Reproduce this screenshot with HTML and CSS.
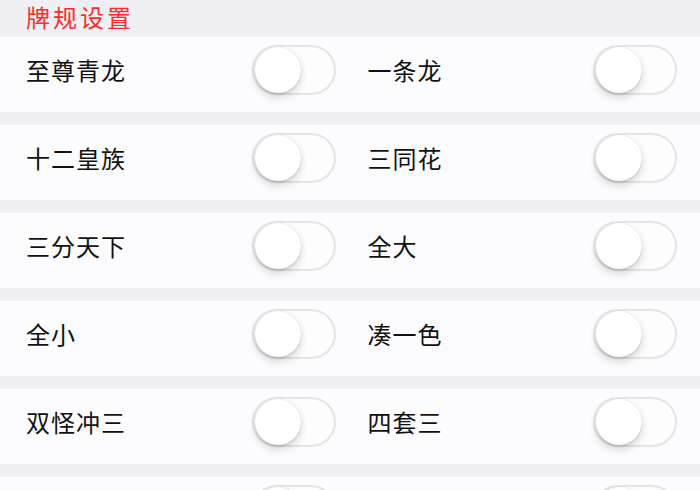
FILE: index.html
```html
<!DOCTYPE html>
<html lang="zh-CN">
<head>
<meta charset="utf-8">
<link rel="stylesheet" href="styles.css">
</head>
<body>
<div class="page">
  <div class="section-title">牌规设置</div>
  <div class="list">
    <div class="row">
      <div class="cell"><span class="label">至尊青龙</span><span class="switch"><span class="knob"></span></span></div>
      <div class="cell"><span class="label">一条龙</span><span class="switch"><span class="knob"></span></span></div>
    </div>
    <div class="row">
      <div class="cell"><span class="label">十二皇族</span><span class="switch"><span class="knob"></span></span></div>
      <div class="cell"><span class="label">三同花</span><span class="switch"><span class="knob"></span></span></div>
    </div>
    <div class="row">
      <div class="cell"><span class="label">三分天下</span><span class="switch"><span class="knob"></span></span></div>
      <div class="cell"><span class="label">全大</span><span class="switch"><span class="knob"></span></span></div>
    </div>
    <div class="row">
      <div class="cell"><span class="label">全小</span><span class="switch"><span class="knob"></span></span></div>
      <div class="cell"><span class="label">凑一色</span><span class="switch"><span class="knob"></span></span></div>
    </div>
    <div class="row">
      <div class="cell"><span class="label">双怪冲三</span><span class="switch"><span class="knob"></span></span></div>
      <div class="cell"><span class="label">四套三</span><span class="switch"><span class="knob"></span></span></div>
    </div>
    <div class="row">
      <div class="cell"><span class="label"></span><span class="switch"><span class="knob"></span></span></div>
      <div class="cell"><span class="label"></span><span class="switch"><span class="knob"></span></span></div>
    </div>
  </div>
</div>
</body>
</html>
```
FILE: styles.css
```css
html, body {
  margin: 0;
  padding: 0;
  background: #efeff4;
  font-family: "Noto Sans CJK SC", "Noto Sans", sans-serif;
  overflow: hidden;
}
.page {
  width: 700px;
}
.section-title {
  height: 37px;
  box-sizing: border-box;
  padding-left: 26px;
  color: #ff2b2b;
  font-size: 24px;
  line-height: 34px;
  letter-spacing: 3px;
}
.list {
  display: flex;
  flex-direction: column;
  gap: 13px;
}
.row {
  height: 75px;
  box-sizing: border-box;
  background: #fcfcfe;
  display: grid;
  grid-template-columns: 1fr 1fr;
  column-gap: 32px;
  padding: 0 23px 9px 26px;
  align-items: center;
}
.cell {
  display: flex;
  align-items: center;
  justify-content: space-between;
}
.label {
  font-size: 24px;
  letter-spacing: 1px;
  color: #111111;
  line-height: 30px;
}
.switch {
  position: relative;
  width: 84px;
  height: 50px;
  box-sizing: border-box;
  border: 2px solid #e4e4e8;
  border-radius: 25px;
  background: #fdfdfe;
}
.knob {
  position: absolute;
  left: 1px;
  top: 0px;
  width: 46px;
  height: 46px;
  border-radius: 50%;
  background: #ffffff;
  box-shadow: 0 5px 9px rgba(0, 0, 0, 0.15), 0 2px 2px rgba(0, 0, 0, 0.07), 0 0 1px rgba(0, 0, 0, 0.2);
}
```
